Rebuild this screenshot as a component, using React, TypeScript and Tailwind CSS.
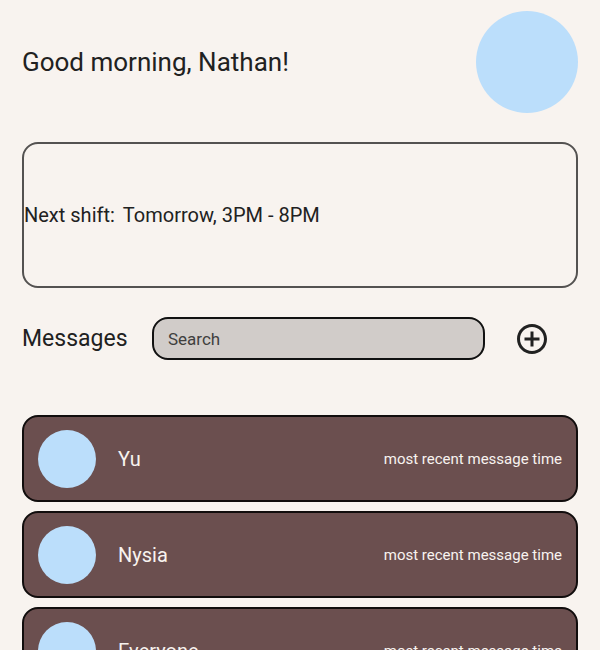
import React from "react";

const conversations = ["Yu", "Nysia", "Everyone"];
const preview = "most recent message time";

export default function App() {
  return (
    <main className="h-screen overflow-hidden bg-[#f8f3ef] px-[22px] pt-[11px] font-['Roboto',sans-serif] text-[#212121]">
      <header className="flex items-center justify-between">
        <h1 className="text-[26px] leading-8">Good morning, Nathan!</h1>
        <div className="size-[102px] rounded-full bg-[#bbdefb]" />
      </header>

      <section className="mt-[29px] flex h-[146px] items-center gap-2 rounded-2xl border-2 border-[#545251] text-[20px] leading-6">
        <p>Next shift:</p>
        <p>Tomorrow, 3PM - 8PM</p>
      </section>

      <section className="mt-[29px]">
        <div className="flex items-center">
          <h2 className="w-[130px] shrink-0 text-[23px] leading-[34px]">Messages</h2>
          <input
            type="search"
            aria-label="Search messages"
            placeholder="Search"
            className="h-[43px] min-w-0 grow rounded-2xl border-2 border-[#111111] bg-[#d1ccc9] px-[14px] text-[17px] placeholder:text-[#403f3e]"
          />
          <button type="button" aria-label="New message" className="ml-[29px] mr-7 shrink-0">
            <svg viewBox="0 0 24 24" className="size-9" fill="currentColor">
              <path d="M13 7h-2v4H7v2h4v4h2v-4h4v-2h-4V7zm-1-5C6.48 2 2 6.48 2 12s4.48 10 10 10 10-4.480 10-10S17.520 2 12 2zm0 18c-4.410 0-8-3.590-8-8s3.590-8 8-8 8 3.590 8 8-3.590 8-8 8z" />
            </svg>
          </button>
        </div>

        <ul className="mt-[55px] flex flex-col gap-[9px]">
          {conversations.map((name) => (
            <li key={name} className="flex h-[87px] items-center rounded-2xl border-2 border-[#110d0d] bg-[#6b4f4f] px-[14px] text-[#f8f3ef]">
              <div className="size-[58px] shrink-0 rounded-full bg-[#bbdefb]" />
              <span className="ml-[22px] grow text-[20px] leading-6">{name}</span>
              <span className="text-[15px] leading-5">{preview}</span>
            </li>
          ))}
        </ul>
      </section>
    </main>
  );
}
